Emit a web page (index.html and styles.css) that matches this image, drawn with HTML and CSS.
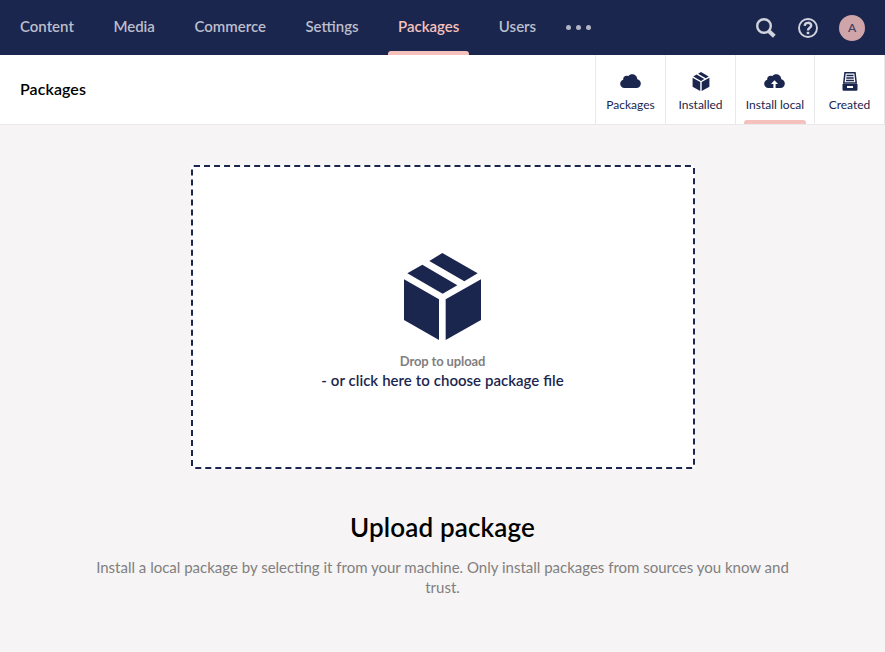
FILE: index.html
```html
<!DOCTYPE html>
<html lang="en">
<head>
<meta charset="utf-8">
<title>Packages</title>
<link rel="stylesheet" href="styles.css">
</head>
<body>
<svg class="defs" width="0" height="0">
  <symbol id="box" viewBox="42 39 231 261">
    <path d="M42 118L147 178V300L42 240ZM167 178L273 118V240L167 300ZM97 74L202 136L158 161L52 100ZM157 39L263 100L223 124L118 63Z"/>
  </symbol>
  <symbol id="cloud" viewBox="0 0 21 14">
    <path d="M4.500 14A4.200 4.200 0 0 1 .2 9.800C.2 7.600 1.600 6.200 3.200 5.700C2.900 2.500 5.800 .8 8.200 2.200C11 -1.200 17 .2 17.300 5.300C19.300 5.600 20.800 7.400 20.800 9.600A4.300 4.300 0 0 1 16.500 14Z"/>
  </symbol>
</svg>
<header class="topbar">
  <nav class="sections">
    <a class="section">Content</a>
    <a class="section">Media</a>
    <a class="section">Commerce</a>
    <a class="section">Settings</a>
    <a class="section active">Packages</a>
    <a class="section">Users</a>
    <a class="more"><i></i><i></i><i></i></a>
  </nav>
  <div class="tools">
    <svg class="tool" width="20" height="20" viewBox="0 0 20 20"><circle cx="8" cy="8" r="6.800" fill="none" stroke="currentColor" stroke-width="2.400"/><path d="M13 13.300L18.300 18.300" stroke="currentColor" stroke-width="4"/></svg>
    <svg class="tool" width="20" height="20" viewBox="0 0 20 20"><g fill="none" stroke="currentColor"><circle cx="10" cy="10" r="9" stroke-width="1.900"/><path d="M6.700 7.900C6.800 3.800 13.300 3.900 13.200 7.600C13.100 9.900 10 9.700 10 12.600" stroke-width="2.400"/></g><path d="M8.700 13.800H11.300V16.200H8.700Z" fill="currentColor"/></svg>
    <span class="avatar">A</span>
  </div>
</header>
<div class="subbar">
  <h1 class="title">Packages</h1>
  <nav class="tabs">
    <a class="tab packages"><svg class="cloud"><use href="#cloud"/></svg><span>Packages</span></a>
    <a class="tab installed"><svg class="mini-box"><use href="#box"/></svg><span>Installed</span></a>
    <a class="tab local current"><svg class="cloud" viewBox="0 0 21 14"><use href="#cloud" width="21" height="14"/><path d="M10.500 6.200L14 10H11.600V14H9.400V10H7Z" fill="#fff"/></svg><span>Install local</span></a>
    <a class="tab created"><svg class="archive" viewBox="0 0 16 19"><path d="M3 .8H13L14.200 11H1.800Z" fill="none" stroke="currentColor" stroke-width="1.500"/><path d="M4.500 3.500H11.500M4.300 6H11.700M4 8.500H12" stroke="currentColor" stroke-width="1.300"/><path d="M.5 12H15.500V17.500Q15.500 18.700 14.300 18.700H1.700Q.5 18.700 .5 17.500ZM5 14V16H11V14Z" fill-rule="evenodd"/></svg><span>Created</span></a>
  </nav>
</div>
<main class="content">
  <div class="dropzone">
    <svg class="big-box"><use href="#box"/></svg>
    <div class="drop">Drop to upload</div>
    <div class="choose">- or click here to choose package file</div>
  </div>
  <h2 class="heading">Upload package</h2>
  <p class="info">Install a local package by selecting it from your machine. Only install packages from sources you know and trust.</p>
</main>
</body>
</html>
```
FILE: styles.css
```css
* { box-sizing: border-box; }
body { margin: 0; height: 652px; overflow: hidden; background: #f6f4f4; font-family: Lato, sans-serif; color: #1b264f; }
.defs { position: absolute; }
svg { display: block; fill: currentColor; }
h1, h2, p { margin: 0; }
.topbar { height: 55px; background: #1b264f; display: flex; justify-content: space-between; }
.sections { display: flex; padding-left: 10px; }
.section { position: relative; height: 55px; line-height: 53px; padding: 0 10px; margin-right: 19.500px; font-size: 15px; font-weight: 600; color: #bbbecb; white-space: nowrap; }
.section.active { color: #f5c1bc; }
.section.active::after { content: ""; position: absolute; left: 0; right: 0; bottom: 0; height: 4px; border-radius: 3px 3px 0 0; background: #f5c1bc; }
.more { display: flex; align-items: center; gap: 5px; }
.more i { width: 5px; height: 5px; border-radius: 50%; background: #b1b4c4; }
.tools { display: flex; align-items: center; gap: 22px; padding-right: 20px; padding-top: 1px; color: #d1d4dc; }
.avatar { width: 26px; height: 26px; margin-left: -1px; border-radius: 50%; background: #cfa5a9; color: #444464; font-size: 12px; font-weight: 600; line-height: 26px; text-align: center; }
.subbar { height: 70px; background: #fff; border-bottom: 1px solid #e9e9eb; display: flex; justify-content: space-between; }
.title { padding-left: 20px; line-height: 68px; font-size: 16px; font-weight: 600; letter-spacing: .08px; color: #000; }
.tabs { display: flex; border-right: 1px solid #e9e9eb; }
.tab { position: relative; display: flex; flex-direction: column; align-items: center; border-left: 1px solid #e9e9eb; font-size: 12px; white-space: nowrap; }
.tab span { margin-top: auto; margin-bottom: 11px; line-height: 16px; }
.packages, .installed { width: 70px; }
.local { width: 79px; }
.created { width: 70px; }
.current::after { content: ""; position: absolute; left: 8px; right: 8px; bottom: 0; height: 4px; border-radius: 3px 3px 0 0; background: #f5c1bc; }
.cloud { width: 21px; height: 14px; margin-top: 19px; margin-right: 1px; }
.mini-box { width: 18px; height: 19px; margin-top: 17px; }
.archive { width: 16px; height: 19px; margin-top: 17px; }
.content { display: flex; flex-direction: column; align-items: center; padding-top: 40px; }
.dropzone { width: 504px; height: 304px; background: #fff; border: 2px dashed #1b264f; border-radius: 3px; display: flex; flex-direction: column; align-items: center; padding-top: 86px; }
.big-box { width: 79px; height: 87px; margin-right: 1px; }
.drop { margin-top: 11px; font-size: 13px; font-weight: 700; letter-spacing: -.13px; line-height: 20px; color: #817f7f; }
.choose { font-size: 15px; font-weight: 600; word-spacing: .25px; line-height: 18px; }
.heading { margin-top: 39px; font-size: 26px; font-weight: 600; letter-spacing: .14px; line-height: 38px; color: #000; }
.info { width: 704px; margin-top: 11px; font-size: 15px; line-height: 20px; text-align: center; color: #817f7f; }
```
